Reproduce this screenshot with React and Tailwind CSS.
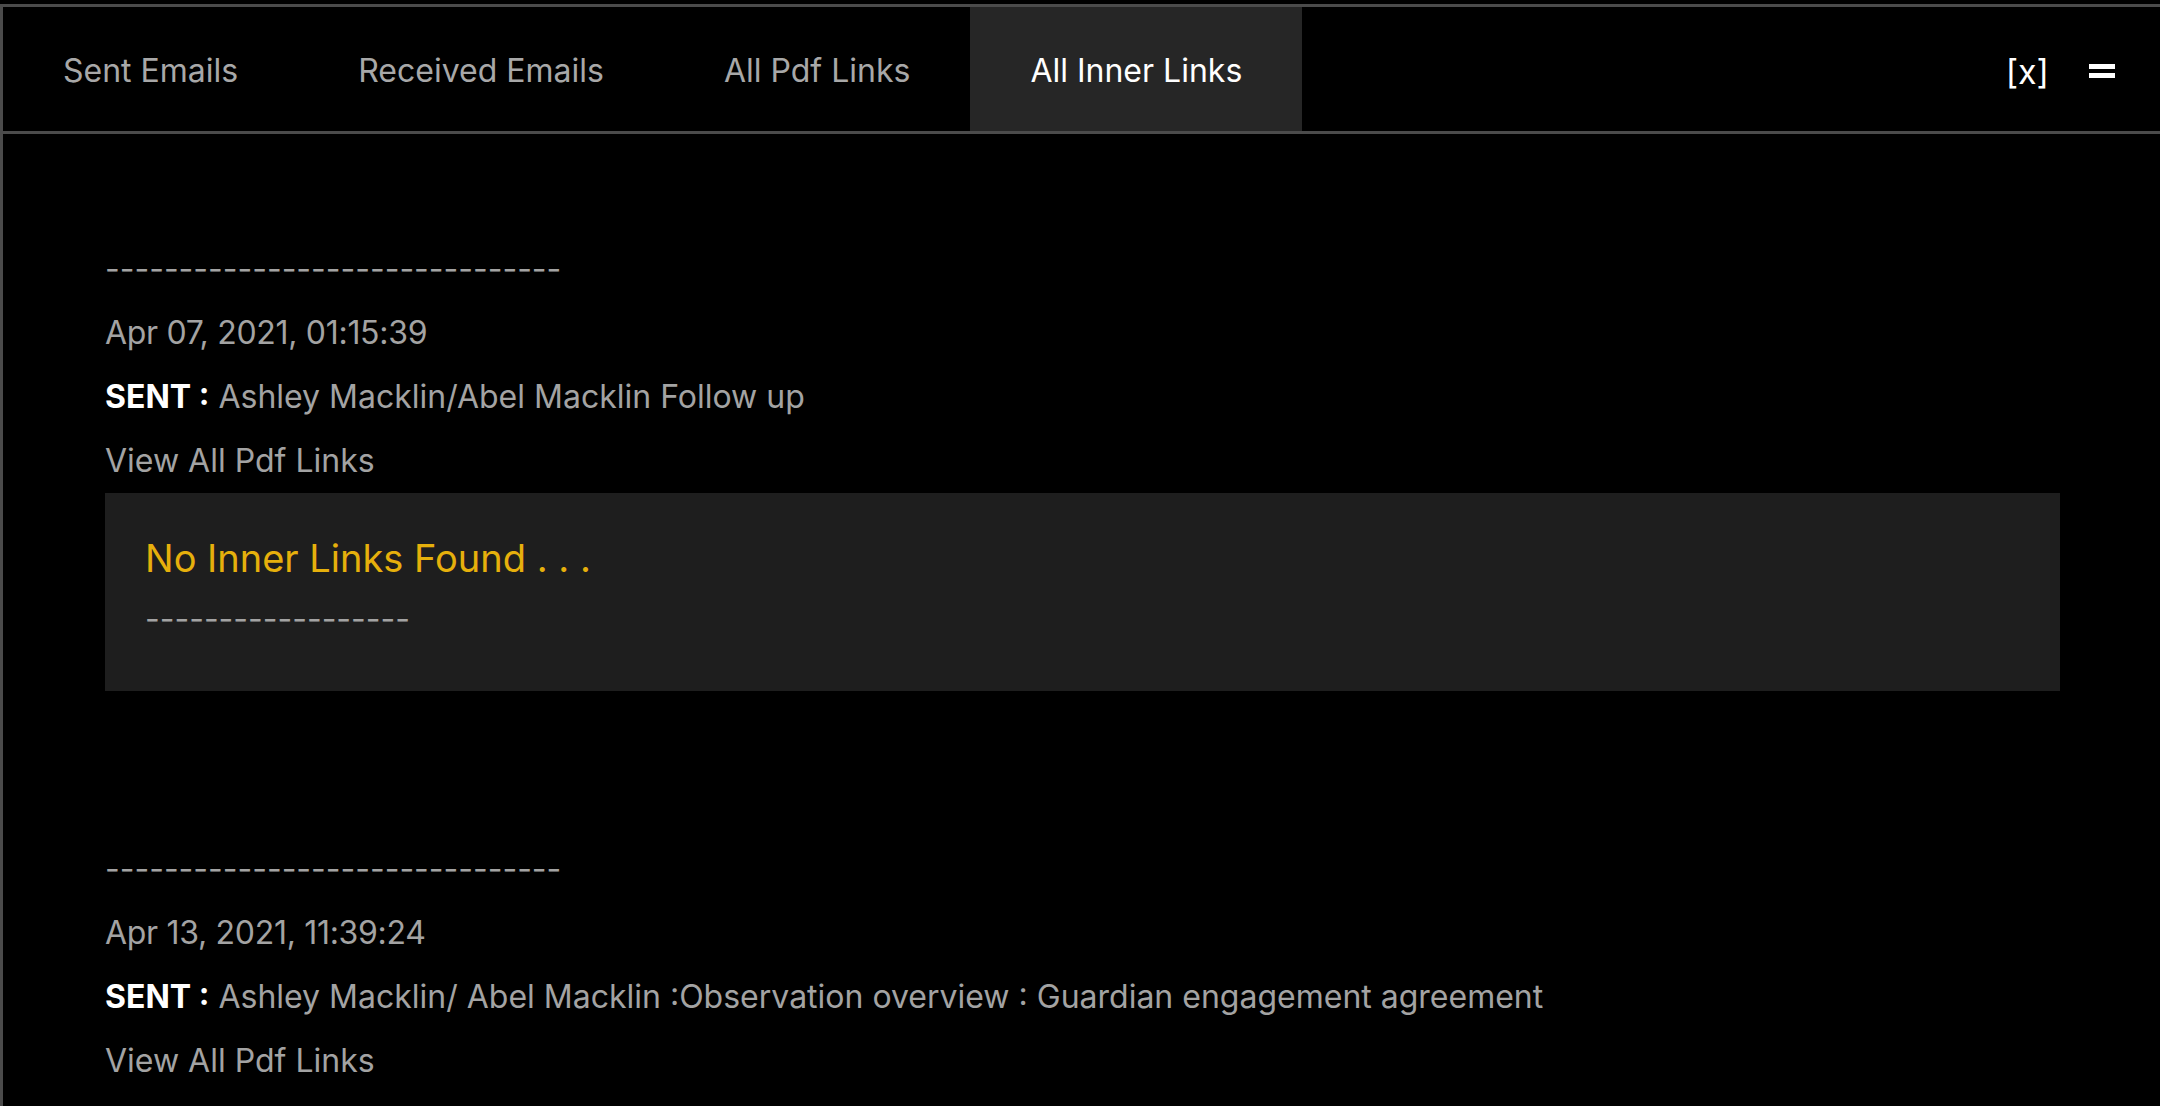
import React from 'react'

const tabs = ['Sent Emails', 'Received Emails', 'All Pdf Links', 'All Inner Links']

const emails = [
  { date: 'Apr 07, 2021, 01:15:39', subject: 'Ashley Macklin/Abel Macklin Follow up', showBox: true },
  { date: 'Apr 13, 2021, 11:39:24', subject: 'Ashley Macklin/ Abel Macklin :Observation overview : Guardian engagement agreement', showBox: false },
]

function EmailEntry({ email, first }) {
  return (
    <div className={first ? '' : 'mt-[146px]'}>
      <div className="leading-[64px] text-[#a3a3a3]">-------------------------------</div>
      <div className="leading-[64px] text-[#a3a3a3] tracking-[-0.3px]">{email.date}</div>
      <div className="leading-[64px] text-[#a3a3a3]">
        <span className="font-bold text-white">SENT :</span> {email.subject}
      </div>
      <div className="leading-[64px] text-[#a3a3a3]">View All Pdf Links</div>
      {email.showBox && (
        <div className="bg-[#1e1e1e] px-[40px] pt-[36px] pb-[40px]">
          <div className="text-[38px] leading-[58px] text-[#e6b00c]">No Inner Links Found . . .</div>
          <div className="leading-[64px] text-[#a3a3a3]">------------------</div>
        </div>
      )}
    </div>
  )
}

export default function App() {
  const active = 'All Inner Links'
  return (
    <div className="min-h-screen bg-black pt-[4px]" style={{ fontFamily: 'Inter, "Noto Sans", sans-serif' }}>
      <div className="border-t-[3px] border-l-[3px] border-[#4b4b4b] min-h-[1102px]">
        <div className="flex items-stretch justify-between h-[127px] border-b-[3px] border-[#4b4b4b]">
          <div className="flex">
            {tabs.map((tab) => (
              <div
                key={tab}
                className={
                  'flex items-center px-[60px] pt-[4px] text-[32px] ' +
                  (tab === active ? 'bg-[#262626] text-white' : 'text-[#a8a8a8]')
                }
              >
                {tab}
              </div>
            ))}
          </div>
          <div className="flex items-center gap-[40px] pt-[4px] pr-[45px]">
            <span className="text-[34px] text-white">[x]</span>
            <div className="flex flex-col gap-[4px]">
              <div className="w-[26px] h-[5px] bg-white"></div>
              <div className="w-[26px] h-[5px] bg-white"></div>
            </div>
          </div>
        </div>
        <div className="pt-[103px] pl-[102px] pr-[100px] text-[32px]">
          {emails.map((email, i) => (
            <EmailEntry key={email.date} email={email} first={i === 0} />
          ))}
        </div>
      </div>
    </div>
  )
}
